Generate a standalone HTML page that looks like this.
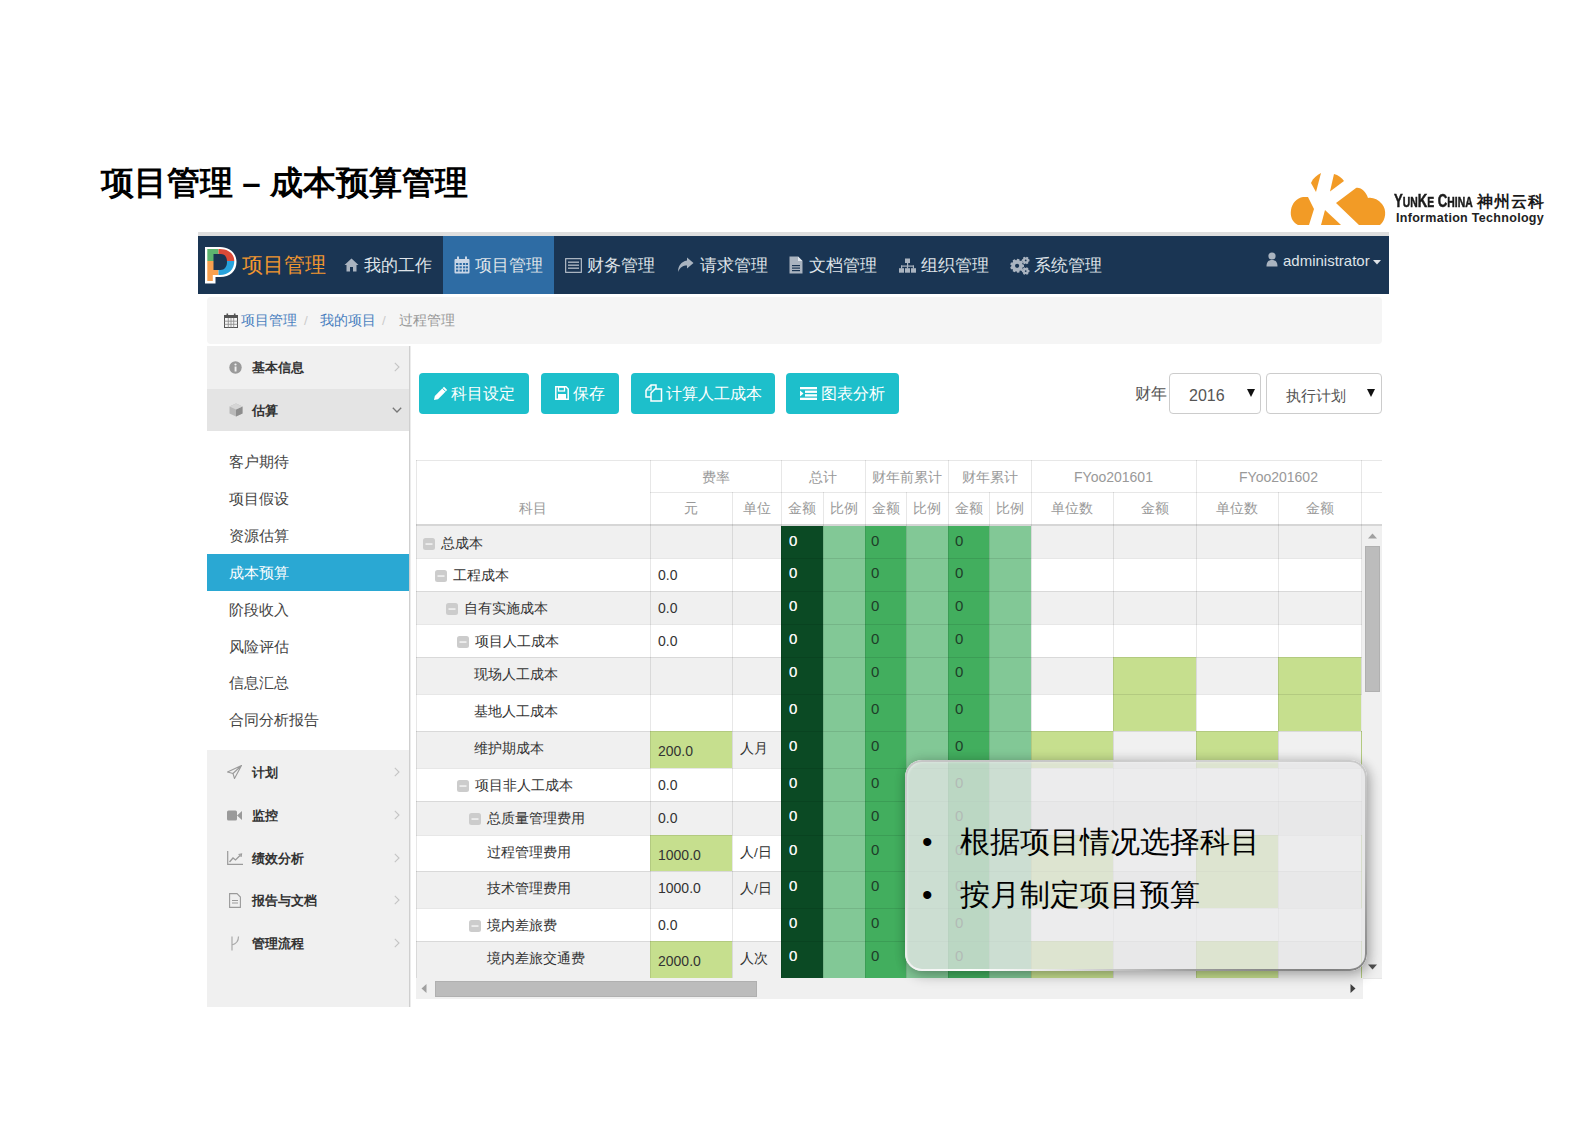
<!DOCTYPE html>
<html><head><meta charset="utf-8">
<style>
*{box-sizing:border-box;margin:0;padding:0}
html,body{width:1587px;height:1122px;overflow:hidden;background:#fff}
body{position:relative;font-family:"Liberation Sans",sans-serif;color:#333}
.abs{position:absolute}
.title{left:100px;top:160px;font-size:33px;font-weight:bold;color:#000;white-space:nowrap;line-height:40px}
.topline{left:198px;top:232px;width:1191px;height:4px;background:#dedede}
.nav{left:198px;top:236px;width:1191px;height:58px;background:#1a3553}
.nav .it{position:absolute;top:0;height:58px;line-height:58px;font-size:18px;color:#dfe3e8;white-space:nowrap}
.nav .act{background:#2e6ca4}
.brand{left:44px;top:0;height:58px;line-height:58px;font-size:20.5px;color:#f0962f;white-space:nowrap}
.bc{left:207px;top:297px;width:1175px;height:47px;background:#f5f5f5;border-radius:4px;font-size:13.5px;line-height:48px;white-space:nowrap}
.bc span{position:absolute;top:0}
.side{left:207px;top:346px;width:202px;height:661px;background:#f0f0f0;border-right:2px solid #d5d5d5}
.sitem{position:absolute;left:0;width:200px;font-size:14px;font-weight:bold;color:#333;white-space:nowrap}
.sitem .t{position:absolute;left:45px}
.sitem .ic{position:absolute;left:20px}
.sitem .chev{position:absolute;left:186px;color:#bbb;font-weight:normal}
.sub{position:absolute;left:22px;font-size:15px;color:#444;white-space:nowrap}
.btn{position:absolute;top:373px;height:41px;background:#1dbfcb;border-radius:4px;color:#fff;font-size:16px;line-height:41px;white-space:nowrap}
.btn span{position:absolute;top:0}
.sel{position:absolute;top:373px;height:41px;background:#fff;border:1px solid #ccc;border-radius:4px;font-size:16px;color:#555;line-height:41px;white-space:nowrap}
.sel span{position:absolute;top:0}
.ov{left:905px;top:760px;width:462px;height:211px;border-radius:17px;background:rgba(229,229,231,0.74);box-shadow:3px 5px 13px rgba(0,0,0,0.24),0 0 12px rgba(0,0,0,0.16),inset 2px 2px 3px rgba(255,255,255,0.5)}
.ov::before{content:'';position:absolute;left:0;top:0;right:0;bottom:0;border-radius:17px;padding:2px;background:conic-gradient(from 0deg,#cdcdcd 0deg,#d2d2d2 55deg,#b4b4b4 90deg,#808080 118deg,#9c9c9c 150deg,#c8c8c8 195deg,#fdfdfd 238deg,#dadada 262deg,#c4c4c4 300deg,#cdcdcd 360deg);-webkit-mask:linear-gradient(#000 0 0) content-box,linear-gradient(#000 0 0);-webkit-mask-composite:xor;mask-composite:exclude}
</style></head><body>

<div class="abs title" style="left:101px;top:163px">项目管理 – 成本预算管理</div>
<svg class="abs" style="left:1285px;top:168px" width="110" height="62" viewBox="1285 168 110 62">
<g fill="#f29b26">
<path d="M1303,197 L1308,197 L1314,209 L1309,225 L1298,225 C1292,222 1290,216 1291,210 C1292,203 1297,198 1303,197 Z"/>
<path d="M1311,183 C1313,178 1317,175 1321,173 L1316,192 Z"/>
<path d="M1334,174 C1338,175 1342,178 1344,181 L1330,191.5 Z"/>
<path d="M1325,210 L1341,225 L1321,225 Z"/>
<path d="M1336,203 L1356,188 C1361,187 1366,192 1368,198 C1372,197 1378,199 1382,204 C1387,210 1386,220 1380,225 L1359,225 Z"/>
</g></svg>
<div class="abs" style="left:1394px;top:191px;font-size:17.8px;font-weight:bold;color:#1a1a1a;white-space:nowrap;line-height:20px;transform:scaleX(0.74);transform-origin:0 0;-webkit-text-stroke:0.5px #1a1a1a">Y<span style="font-size:14px">UN</span>K<span style="font-size:14px">E</span> C<span style="font-size:14px">HINA</span></div>
<div class="abs" style="left:1477px;top:191px;font-size:15.5px;font-weight:bold;color:#1a1a1a;white-space:nowrap;line-height:22px;letter-spacing:1.1px">神州云科</div>
<div class="abs" style="left:1396px;top:211px;font-size:12.5px;font-weight:bold;color:#222;white-space:nowrap;line-height:15px;letter-spacing:0.3px">Information Technology</div>
<div class="abs topline"></div>
<div class="abs nav">
<svg class="abs" style="left:7px;top:11px" width="32" height="37" viewBox="0 0 32 37">
<path d="M0,0 H15 C25,0 31.5,6.5 31.5,15 C31.5,24 25,30 15,30 H10.5 V36.5 H0 Z" fill="#fff"/>
<path d="M2.3,2 H13.5 V14 H2.3 Z" fill="#5db46f"/>
<path d="M13.5,2 H15 C23.5,2 29.3,7 29.3,14 H13.5 Z" fill="#dc4a38"/>
<path d="M2.3,14 H13.5 V28 H7.8 V34 H2.3 Z" fill="#f8a04f"/>
<path d="M13.5,14 H29.3 C29.3,22.5 23.5,28 15,28 H13.5 Z" fill="#27a2dc"/>
<path d="M8.5,7 H16 C20,7 22,10.5 22,15 C22,19.5 19.5,23 15.5,23 H8.5 Z" fill="#1a3553"/>
</svg>
<div class="abs brand">项目管理</div>
<div class="it act" style="left:245px;width:111px"></div>
<div class="abs" style="left:146px;top:22px;line-height:0"><svg width="15" height="14" viewBox="0 0 15 14"><path d="M7.5,0.5 L14.5,7 L12.5,7 L12.5,13.5 L9,13.5 L9,9 L6,9 L6,13.5 L2.5,13.5 L2.5,7 L0.5,7 Z" fill="#aab4c0"/></svg></div>
<div class="it" style="left:166px;font-size:17.3px">我的工作</div>
<div class="abs" style="left:256px;top:20px;line-height:0"><svg width="16" height="18" viewBox="0 0 16 18"><rect x="0.5" y="3" width="15" height="14.5" rx="1" fill="#c9d6e6"/><rect x="3" y="0.5" width="2" height="4" fill="#c9d6e6"/><rect x="11" y="0.5" width="2" height="4" fill="#c9d6e6"/><g fill="#2e6ca4"><rect x="2" y="7" width="2.3" height="2"/><rect x="5.5" y="7" width="2.3" height="2"/><rect x="9" y="7" width="2.3" height="2"/><rect x="12" y="7" width="2" height="2"/><rect x="2" y="10.3" width="2.3" height="2"/><rect x="5.5" y="10.3" width="2.3" height="2"/><rect x="9" y="10.3" width="2.3" height="2"/><rect x="12" y="10.3" width="2" height="2"/><rect x="2" y="13.6" width="2.3" height="2"/><rect x="5.5" y="13.6" width="2.3" height="2"/><rect x="9" y="13.6" width="2.3" height="2"/><rect x="12" y="13.6" width="2" height="2"/></g></svg></div>
<div class="it" style="left:277px;font-size:17.3px">项目管理</div>
<div class="abs" style="left:367px;top:22px;line-height:0"><svg width="17" height="15" viewBox="0 0 17 15"><rect x="0.5" y="0.5" width="16" height="14" rx="1" fill="none" stroke="#aab4c0" stroke-width="1.5"/><rect x="3" y="3.5" width="11" height="1.4" fill="#aab4c0"/><rect x="3" y="6.5" width="11" height="1.4" fill="#aab4c0"/><rect x="3" y="9.5" width="11" height="1.4" fill="#aab4c0"/></svg></div>
<div class="it" style="left:389px;font-size:17.3px">财务管理</div>
<div class="abs" style="left:479px;top:21px;line-height:0"><svg width="17" height="16" viewBox="0 0 17 16"><path d="M10,0.5 L16.5,6 L10,11.5 L10,8.5 C6,8.5 3,10 1,15 C1,9 4,4.5 10,3.5 Z" fill="#aab4c0"/></svg></div>
<div class="it" style="left:502px;font-size:17.3px">请求管理</div>
<div class="abs" style="left:591px;top:20px;line-height:0"><svg width="14" height="18" viewBox="0 0 14 18"><path d="M0.5,0.5 H9 L13.5,5 V17.5 H0.5 Z" fill="#aab4c0"/><path d="M9,0.5 V5 H13.5 Z" fill="#dfe5ec"/><rect x="3" y="9" width="8" height="1.2" fill="#1a3553"/><rect x="3" y="11.5" width="8" height="1.2" fill="#1a3553"/><rect x="3" y="14" width="8" height="1.2" fill="#1a3553"/></svg></div>
<div class="it" style="left:611px;font-size:17.3px">文档管理</div>
<div class="abs" style="left:701px;top:22px;line-height:0"><svg width="17" height="15" viewBox="0 0 17 15"><rect x="6" y="0.5" width="5" height="4.5" fill="#aab4c0"/><rect x="8" y="5" width="1.2" height="3" fill="#aab4c0"/><rect x="2" y="7.5" width="13" height="1.2" fill="#aab4c0"/><rect x="2" y="7.5" width="1.2" height="3" fill="#aab4c0"/><rect x="7.9" y="7.5" width="1.2" height="3" fill="#aab4c0"/><rect x="13.8" y="7.5" width="1.2" height="3" fill="#aab4c0"/><rect x="0" y="10.2" width="5" height="4.5" fill="#aab4c0"/><rect x="6" y="10.2" width="5" height="4.5" fill="#aab4c0"/><rect x="12" y="10.2" width="5" height="4.5" fill="#aab4c0"/></svg></div>
<div class="it" style="left:723px;font-size:17.3px">组织管理</div>
<div class="abs" style="left:811px;top:19px;line-height:0"><svg width="22" height="20" viewBox="0 0 22 20"><g fill="#aab4c0" fill-rule="evenodd"><path d="M15.01,9.70 L15.01,11.90 L13.46,12.44 L13.25,12.99 L14.10,14.41 L12.69,16.08 L11.15,15.50 L10.64,15.79 L10.38,17.42 L8.22,17.80 L7.42,16.36 L6.84,16.26 L5.59,17.34 L3.69,16.24 L4.00,14.62 L3.63,14.17 L1.98,14.19 L1.23,12.14 L2.51,11.09 L2.51,10.51 L1.23,9.46 L1.98,7.41 L3.63,7.43 L4.00,6.98 L3.69,5.36 L5.59,4.26 L6.84,5.34 L7.42,5.24 L8.22,3.80 L10.38,4.18 L10.64,5.81 L11.15,6.10 L12.69,5.52 L14.10,7.19 L13.25,8.61 L13.46,9.16 Z M8.10,10.80 m-2.1,0 a2.1,2.1 0 1,0 4.2,0 a2.1,2.1 0 1,0 -4.2,0 Z"/><path d="M20.49,4.49 L20.49,6.31 L19.41,6.69 L19.17,7.10 L19.38,8.23 L17.81,9.14 L16.94,8.39 L16.46,8.39 L15.59,9.14 L14.02,8.23 L14.23,7.10 L13.99,6.69 L12.91,6.31 L12.91,4.49 L13.99,4.11 L14.23,3.70 L14.02,2.57 L15.59,1.66 L16.46,2.41 L16.94,2.41 L17.81,1.66 L19.38,2.57 L19.17,3.70 L19.41,4.11 Z M16.7,5.4 m-0.9,0 a0.9,0.9 0 1,0 1.8,0 a0.9,0.9 0 1,0 -1.8,0 Z"/><path d="M20.49,15.19 L20.49,17.01 L19.41,17.39 L19.17,17.80 L19.38,18.93 L17.81,19.84 L16.94,19.09 L16.46,19.09 L15.59,19.84 L14.02,18.93 L14.23,17.80 L13.99,17.39 L12.91,17.01 L12.91,15.19 L13.99,14.81 L14.23,14.40 L14.02,13.27 L15.59,12.36 L16.46,13.11 L16.94,13.11 L17.81,12.36 L19.38,13.27 L19.17,14.40 L19.41,14.81 Z M16.7,16.1 m-0.9,0 a0.9,0.9 0 1,0 1.8,0 a0.9,0.9 0 1,0 -1.8,0 Z"/></g></svg></div>
<div class="it" style="left:836px;font-size:17.3px">系统管理</div>
<div class="abs" style="left:1068px;top:16px;line-height:0"><svg width="12" height="15" viewBox="0 0 12 15"><circle cx="6" cy="4" r="3.6" fill="#aab4c0"/><path d="M0.5,14.5 C0.5,10 2.5,8 6,8 C9.5,8 11.5,10 11.5,14.5 Z" fill="#aab4c0"/></svg></div>
<div class="it" style="left:1085px;top:-4px;font-size:15px">administrator</div>
<svg class="abs" style="left:1175px;top:24px" width="8" height="5" viewBox="0 0 8 5"><path d="M0,0 H8 L4,4.5 Z" fill="#dfe3e8"/></svg>
</div>
<div class="abs bc">
<div class="abs" style="left:17px;top:16px;line-height:0"><svg width="14" height="15" viewBox="0 0 14 15"><rect x="0.5" y="2.5" width="13" height="12" fill="none" stroke="#555" stroke-width="1"/><rect x="0.5" y="2.5" width="13" height="2.5" fill="#555"/><rect x="2.5" y="0.5" width="1.6" height="3" fill="#555"/><rect x="9.9" y="0.5" width="1.6" height="3" fill="#555"/><g stroke="#888" stroke-width="0.8"><path d="M4.3,5 V14.5 M7,5 V14.5 M9.7,5 V14.5 M0.5,8.2 H13.5 M0.5,11.3 H13.5"/></g></svg></div>
<span style="left:34px;color:#4a7fbf">项目管理</span>
<span style="left:97px;color:#ccc">/</span>
<span style="left:113px;color:#4a7fbf">我的项目</span>
<span style="left:175px;color:#ccc">/</span>
<span style="left:192px;color:#999">过程管理</span>
</div>
<div class="abs" style="left:207px;top:346px;width:202px;height:661px;background:#f0f0f0"></div>
<div class="abs" style="left:207px;top:389px;width:202px;height:42px;background:#e4e4e4"></div>
<div class="abs" style="left:207px;top:431px;width:202px;height:319px;background:#fff"></div>
<div class="abs" style="left:207px;top:554px;width:202px;height:37px;background:#2aa8d3"></div>
<div class="abs" style="left:409px;top:346px;width:1px;height:661px;background:#cfcfcf"></div><div class="abs" style="left:410px;top:346px;width:1px;height:661px;background:#ececec"></div>
<div class="abs" style="left:229px;top:361px;line-height:0"><svg width="13" height="13" viewBox="0 0 13 13"><circle cx="6.5" cy="6.5" r="6.2" fill="#9a9a9a"/><rect x="5.6" y="5.5" width="1.9" height="5" fill="#f0f0f0"/><circle cx="6.5" cy="3.5" r="1.1" fill="#f0f0f0"/></svg></div>
<div class="abs" style="left:252px;top:358px;line-height:20px;font-size:13.3px;font-weight:bold;color:#333;white-space:nowrap">基本信息</div>
<div class="abs" style="left:394px;top:362px;line-height:0"><svg width="6" height="10" viewBox="0 0 6 10"><path d="M0.8,0.8 L5,5 L0.8,9.2" fill="none" stroke="#c4c4c4" stroke-width="1.1"/></svg></div>
<div class="abs" style="left:229px;top:403px;line-height:0"><svg width="14" height="14" viewBox="0 0 14 14"><path d="M7,0.5 L13.5,3.5 L13.5,10.5 L7,13.5 L0.5,10.5 L0.5,3.5 Z" fill="#b9b9b9"/><path d="M7,6.5 L13.5,3.5 L13.5,10.5 L7,13.5 Z" fill="#8d8d8d"/><path d="M0.5,3.5 L7,0.5 L13.5,3.5 L7,6.5 Z" fill="#d6d6d6"/></svg></div>
<div class="abs" style="left:252px;top:401px;line-height:20px;font-size:13.3px;font-weight:bold;color:#333;white-space:nowrap">估算</div>
<div class="abs" style="left:392px;top:407px;line-height:0"><svg width="10" height="6" viewBox="0 0 10 6"><path d="M0.8,0.8 L5,5 L9.2,0.8" fill="none" stroke="#777" stroke-width="1.3"/></svg></div>
<div class="abs" style="left:227px;top:765px;line-height:0"><svg width="15" height="14" viewBox="0 0 15 14"><path d="M14.5,0.5 L0.5,7 L6,8.5 L7.5,13.5 Z M6,8.5 L14.5,0.5" fill="none" stroke="#9a9a9a" stroke-width="1.1" stroke-linejoin="round"/></svg></div>
<div class="abs" style="left:252px;top:763px;line-height:20px;font-size:13.3px;font-weight:bold;color:#333;white-space:nowrap">计划</div>
<div class="abs" style="left:394px;top:767px;line-height:0"><svg width="6" height="10" viewBox="0 0 6 10"><path d="M0.8,0.8 L5,5 L0.8,9.2" fill="none" stroke="#c4c4c4" stroke-width="1.1"/></svg></div>
<div class="abs" style="left:227px;top:810px;line-height:0"><svg width="15" height="11" viewBox="0 0 15 11"><rect x="0" y="0.5" width="10" height="10" rx="1.5" fill="#9a9a9a"/><path d="M10,5.5 L15,1 L15,10 Z" fill="#9a9a9a"/></svg></div>
<div class="abs" style="left:252px;top:806px;line-height:20px;font-size:13.3px;font-weight:bold;color:#333;white-space:nowrap">监控</div>
<div class="abs" style="left:394px;top:810px;line-height:0"><svg width="6" height="10" viewBox="0 0 6 10"><path d="M0.8,0.8 L5,5 L0.8,9.2" fill="none" stroke="#c4c4c4" stroke-width="1.1"/></svg></div>
<div class="abs" style="left:227px;top:851px;line-height:0"><svg width="16" height="14" viewBox="0 0 16 14"><path d="M0.7,0 V13.3 H16" fill="none" stroke="#9a9a9a" stroke-width="1.2"/><path d="M2.5,11 L6,7 L8.5,9 L13.5,4" fill="none" stroke="#9a9a9a" stroke-width="1.3"/><path d="M11.5,3.5 L14.5,3 L14,6" fill="none" stroke="#9a9a9a" stroke-width="1.2"/></svg></div>
<div class="abs" style="left:252px;top:849px;line-height:20px;font-size:13.3px;font-weight:bold;color:#333;white-space:nowrap">绩效分析</div>
<div class="abs" style="left:394px;top:853px;line-height:0"><svg width="6" height="10" viewBox="0 0 6 10"><path d="M0.8,0.8 L5,5 L0.8,9.2" fill="none" stroke="#c4c4c4" stroke-width="1.1"/></svg></div>
<div class="abs" style="left:229px;top:893px;line-height:0"><svg width="12" height="15" viewBox="0 0 12 15"><path d="M0.6,0.6 H8 L11.4,4 V14.4 H0.6 Z" fill="none" stroke="#9a9a9a" stroke-width="1.1"/><path d="M3,7.5 H9 M3,10 H9" stroke="#9a9a9a" stroke-width="1"/></svg></div>
<div class="abs" style="left:252px;top:891px;line-height:20px;font-size:13.3px;font-weight:bold;color:#333;white-space:nowrap">报告与文档</div>
<div class="abs" style="left:394px;top:895px;line-height:0"><svg width="6" height="10" viewBox="0 0 6 10"><path d="M0.8,0.8 L5,5 L0.8,9.2" fill="none" stroke="#c4c4c4" stroke-width="1.1"/></svg></div>
<div class="abs" style="left:230px;top:936px;line-height:0"><svg width="10" height="15" viewBox="0 0 10 15"><path d="M2,0.5 V14.5 M2,9 C6,8 8.5,5 8.5,0.5" fill="none" stroke="#aaa" stroke-width="1.2"/></svg></div>
<div class="abs" style="left:252px;top:934px;line-height:20px;font-size:13.3px;font-weight:bold;color:#333;white-space:nowrap">管理流程</div>
<div class="abs" style="left:394px;top:938px;line-height:0"><svg width="6" height="10" viewBox="0 0 6 10"><path d="M0.8,0.8 L5,5 L0.8,9.2" fill="none" stroke="#c4c4c4" stroke-width="1.1"/></svg></div>
<div class="abs" style="left:229px;top:451px;line-height:22px;font-size:15px;color:#444;white-space:nowrap">客户期待</div>
<div class="abs" style="left:229px;top:488px;line-height:22px;font-size:15px;color:#444;white-space:nowrap">项目假设</div>
<div class="abs" style="left:229px;top:525px;line-height:22px;font-size:15px;color:#444;white-space:nowrap">资源估算</div>
<div class="abs" style="left:229px;top:562px;line-height:22px;font-size:15px;color:#fff;white-space:nowrap">成本预算</div>
<div class="abs" style="left:229px;top:599px;line-height:22px;font-size:15px;color:#444;white-space:nowrap">阶段收入</div>
<div class="abs" style="left:229px;top:636px;line-height:22px;font-size:15px;color:#444;white-space:nowrap">风险评估</div>
<div class="abs" style="left:229px;top:672px;line-height:22px;font-size:15px;color:#444;white-space:nowrap">信息汇总</div>
<div class="abs" style="left:229px;top:709px;line-height:22px;font-size:15px;color:#444;white-space:nowrap">合同分析报告</div>
<div class="btn" style="left:419px;width:110px"></div>
<div class="abs" style="left:433px;top:386px;line-height:0"><svg width="15" height="15" viewBox="0 0 15 15"><path d="M11,0.8 L14.2,4 L5,13.2 L1,14 L1.8,10 Z" fill="#fff"/><path d="M9.5,2.3 L12.7,5.5" stroke="#1dbfcb" stroke-width="0.9"/></svg></div>
<div class="abs" style="left:451px;top:383px;line-height:22px;font-size:16px;color:#fff;white-space:nowrap">科目设定</div>
<div class="btn" style="left:541px;width:78px"></div>
<div class="abs" style="left:555px;top:386px;line-height:0"><svg width="14" height="14" viewBox="0 0 14 14"><path d="M0.8,0.8 H11 L13.2,3 V13.2 H0.8 Z" fill="none" stroke="#fff" stroke-width="1.5"/><rect x="3.5" y="1" width="6" height="4" fill="none" stroke="#fff" stroke-width="1.3"/><rect x="3" y="8" width="8" height="5" fill="#fff"/></svg></div>
<div class="abs" style="left:573px;top:383px;line-height:22px;font-size:16px;color:#fff;white-space:nowrap">保存</div>
<div class="btn" style="left:631px;width:144px"></div>
<div class="abs" style="left:645px;top:384px;line-height:0"><svg width="18" height="18" viewBox="0 0 18 18"><path d="M1,6 L6,1 H11 V5" fill="none" stroke="#fff" stroke-width="1.5"/><path d="M1,6 V13 H6" fill="none" stroke="#fff" stroke-width="1.5"/><path d="M6,9 L10,5 H16.5 V17 H6 Z" fill="none" stroke="#fff" stroke-width="1.5"/><path d="M1,6 H6 V1" fill="none" stroke="#fff" stroke-width="1.2"/></svg></div>
<div class="abs" style="left:666px;top:383px;line-height:22px;font-size:16px;color:#fff;white-space:nowrap">计算人工成本</div>
<div class="btn" style="left:786px;width:113px"></div>
<div class="abs" style="left:800px;top:387px;line-height:0"><svg width="17" height="13" viewBox="0 0 17 13"><g fill="#fff"><rect x="0" y="0" width="17" height="2.3"/><rect x="5" y="3.6" width="12" height="2.3"/><rect x="5" y="7.2" width="12" height="2.3"/><rect x="0" y="10.7" width="17" height="2.3"/><path d="M0,3.5 L3.5,6.5 L0,9.5 Z"/></g></svg></div>
<div class="abs" style="left:821px;top:383px;line-height:22px;font-size:16px;color:#fff;white-space:nowrap">图表分析</div>
<div class="abs" style="left:1135px;top:383px;line-height:22px;font-size:16px;color:#555;white-space:nowrap">财年</div>
<div class="sel" style="left:1169px;width:92px"></div>
<div class="abs" style="left:1189px;top:385px;line-height:22px;font-size:16px;color:#555">2016</div>
<svg class="abs" style="left:1247px;top:389px" width="8" height="8" viewBox="0 0 8 8"><path d="M0,0 H8 L4,8 Z" fill="#111"/></svg>
<div class="sel" style="left:1266px;width:116px"></div>
<div class="abs" style="left:1286px;top:385px;line-height:22px;font-size:15px;color:#555;white-space:nowrap">执行计划</div>
<svg class="abs" style="left:1367px;top:389px" width="8" height="8" viewBox="0 0 8 8"><path d="M0,0 H8 L4,8 Z" fill="#111"/></svg>
<div class="abs" style="left:0;top:0;width:1587px;height:1122px;overflow:hidden;clip-path:inset(460px 205px 120px 416px)">
<div class="abs" style="left:416px;top:460px;width:966px;height:66px;background:#fff;"></div>
<div class="abs" style="left:416px;top:526px;width:365px;height:32px;background:#f0f0f0;"></div>
<div class="abs" style="left:781px;top:526px;width:42px;height:32px;background:#0b4a24;"></div>
<div class="abs" style="left:823px;top:526px;width:42px;height:32px;background:#82c896;"></div>
<div class="abs" style="left:865px;top:526px;width:41px;height:32px;background:#42ae5e;"></div>
<div class="abs" style="left:906px;top:526px;width:42px;height:32px;background:#82c896;"></div>
<div class="abs" style="left:948px;top:526px;width:41px;height:32px;background:#42ae5e;"></div>
<div class="abs" style="left:989px;top:526px;width:42px;height:32px;background:#82c896;"></div>
<div class="abs" style="left:1031px;top:526px;width:351px;height:32px;background:#f0f0f0;"></div>
<div class="abs" style="left:416px;top:558px;width:365px;height:33px;background:#fff;"></div>
<div class="abs" style="left:781px;top:558px;width:42px;height:33px;background:#0b4a24;"></div>
<div class="abs" style="left:823px;top:558px;width:42px;height:33px;background:#82c896;"></div>
<div class="abs" style="left:865px;top:558px;width:41px;height:33px;background:#42ae5e;"></div>
<div class="abs" style="left:906px;top:558px;width:42px;height:33px;background:#82c896;"></div>
<div class="abs" style="left:948px;top:558px;width:41px;height:33px;background:#42ae5e;"></div>
<div class="abs" style="left:989px;top:558px;width:42px;height:33px;background:#82c896;"></div>
<div class="abs" style="left:1031px;top:558px;width:351px;height:33px;background:#fff;"></div>
<div class="abs" style="left:416px;top:591px;width:365px;height:33px;background:#f0f0f0;"></div>
<div class="abs" style="left:781px;top:591px;width:42px;height:33px;background:#0b4a24;"></div>
<div class="abs" style="left:823px;top:591px;width:42px;height:33px;background:#82c896;"></div>
<div class="abs" style="left:865px;top:591px;width:41px;height:33px;background:#42ae5e;"></div>
<div class="abs" style="left:906px;top:591px;width:42px;height:33px;background:#82c896;"></div>
<div class="abs" style="left:948px;top:591px;width:41px;height:33px;background:#42ae5e;"></div>
<div class="abs" style="left:989px;top:591px;width:42px;height:33px;background:#82c896;"></div>
<div class="abs" style="left:1031px;top:591px;width:351px;height:33px;background:#f0f0f0;"></div>
<div class="abs" style="left:416px;top:624px;width:365px;height:33px;background:#fff;"></div>
<div class="abs" style="left:781px;top:624px;width:42px;height:33px;background:#0b4a24;"></div>
<div class="abs" style="left:823px;top:624px;width:42px;height:33px;background:#82c896;"></div>
<div class="abs" style="left:865px;top:624px;width:41px;height:33px;background:#42ae5e;"></div>
<div class="abs" style="left:906px;top:624px;width:42px;height:33px;background:#82c896;"></div>
<div class="abs" style="left:948px;top:624px;width:41px;height:33px;background:#42ae5e;"></div>
<div class="abs" style="left:989px;top:624px;width:42px;height:33px;background:#82c896;"></div>
<div class="abs" style="left:1031px;top:624px;width:351px;height:33px;background:#fff;"></div>
<div class="abs" style="left:416px;top:657px;width:365px;height:37px;background:#f0f0f0;"></div>
<div class="abs" style="left:781px;top:657px;width:42px;height:37px;background:#0b4a24;"></div>
<div class="abs" style="left:823px;top:657px;width:42px;height:37px;background:#82c896;"></div>
<div class="abs" style="left:865px;top:657px;width:41px;height:37px;background:#42ae5e;"></div>
<div class="abs" style="left:906px;top:657px;width:42px;height:37px;background:#82c896;"></div>
<div class="abs" style="left:948px;top:657px;width:41px;height:37px;background:#42ae5e;"></div>
<div class="abs" style="left:989px;top:657px;width:42px;height:37px;background:#82c896;"></div>
<div class="abs" style="left:1031px;top:657px;width:351px;height:37px;background:#f0f0f0;"></div>
<div class="abs" style="left:1113px;top:657px;width:83px;height:37px;background:#c6df8e;"></div>
<div class="abs" style="left:1278px;top:657px;width:83px;height:37px;background:#c6df8e;"></div>
<div class="abs" style="left:416px;top:694px;width:365px;height:37px;background:#fff;"></div>
<div class="abs" style="left:781px;top:694px;width:42px;height:37px;background:#0b4a24;"></div>
<div class="abs" style="left:823px;top:694px;width:42px;height:37px;background:#82c896;"></div>
<div class="abs" style="left:865px;top:694px;width:41px;height:37px;background:#42ae5e;"></div>
<div class="abs" style="left:906px;top:694px;width:42px;height:37px;background:#82c896;"></div>
<div class="abs" style="left:948px;top:694px;width:41px;height:37px;background:#42ae5e;"></div>
<div class="abs" style="left:989px;top:694px;width:42px;height:37px;background:#82c896;"></div>
<div class="abs" style="left:1031px;top:694px;width:351px;height:37px;background:#fff;"></div>
<div class="abs" style="left:1113px;top:694px;width:83px;height:37px;background:#c6df8e;"></div>
<div class="abs" style="left:1278px;top:694px;width:83px;height:37px;background:#c6df8e;"></div>
<div class="abs" style="left:416px;top:731px;width:365px;height:37px;background:#f0f0f0;"></div>
<div class="abs" style="left:650px;top:731px;width:82px;height:37px;background:#c6df8e;"></div>
<div class="abs" style="left:781px;top:731px;width:42px;height:37px;background:#0b4a24;"></div>
<div class="abs" style="left:823px;top:731px;width:42px;height:37px;background:#82c896;"></div>
<div class="abs" style="left:865px;top:731px;width:41px;height:37px;background:#42ae5e;"></div>
<div class="abs" style="left:906px;top:731px;width:42px;height:37px;background:#82c896;"></div>
<div class="abs" style="left:948px;top:731px;width:41px;height:37px;background:#42ae5e;"></div>
<div class="abs" style="left:989px;top:731px;width:42px;height:37px;background:#82c896;"></div>
<div class="abs" style="left:1031px;top:731px;width:351px;height:37px;background:#f0f0f0;"></div>
<div class="abs" style="left:1031px;top:731px;width:82px;height:37px;background:#c6df8e;"></div>
<div class="abs" style="left:1196px;top:731px;width:82px;height:37px;background:#c6df8e;"></div>
<div class="abs" style="left:1361px;top:731px;width:82px;height:37px;background:#c6df8e;"></div>
<div class="abs" style="left:416px;top:768px;width:365px;height:33px;background:#fff;"></div>
<div class="abs" style="left:781px;top:768px;width:42px;height:33px;background:#0b4a24;"></div>
<div class="abs" style="left:823px;top:768px;width:42px;height:33px;background:#82c896;"></div>
<div class="abs" style="left:865px;top:768px;width:41px;height:33px;background:#42ae5e;"></div>
<div class="abs" style="left:906px;top:768px;width:42px;height:33px;background:#82c896;"></div>
<div class="abs" style="left:948px;top:768px;width:41px;height:33px;background:#42ae5e;"></div>
<div class="abs" style="left:989px;top:768px;width:42px;height:33px;background:#82c896;"></div>
<div class="abs" style="left:1031px;top:768px;width:351px;height:33px;background:#fff;"></div>
<div class="abs" style="left:416px;top:801px;width:365px;height:34px;background:#f0f0f0;"></div>
<div class="abs" style="left:781px;top:801px;width:42px;height:34px;background:#0b4a24;"></div>
<div class="abs" style="left:823px;top:801px;width:42px;height:34px;background:#82c896;"></div>
<div class="abs" style="left:865px;top:801px;width:41px;height:34px;background:#42ae5e;"></div>
<div class="abs" style="left:906px;top:801px;width:42px;height:34px;background:#82c896;"></div>
<div class="abs" style="left:948px;top:801px;width:41px;height:34px;background:#42ae5e;"></div>
<div class="abs" style="left:989px;top:801px;width:42px;height:34px;background:#82c896;"></div>
<div class="abs" style="left:1031px;top:801px;width:351px;height:34px;background:#f0f0f0;"></div>
<div class="abs" style="left:416px;top:835px;width:365px;height:36px;background:#fff;"></div>
<div class="abs" style="left:650px;top:835px;width:82px;height:36px;background:#c6df8e;"></div>
<div class="abs" style="left:781px;top:835px;width:42px;height:36px;background:#0b4a24;"></div>
<div class="abs" style="left:823px;top:835px;width:42px;height:36px;background:#82c896;"></div>
<div class="abs" style="left:865px;top:835px;width:41px;height:36px;background:#42ae5e;"></div>
<div class="abs" style="left:906px;top:835px;width:42px;height:36px;background:#82c896;"></div>
<div class="abs" style="left:948px;top:835px;width:41px;height:36px;background:#42ae5e;"></div>
<div class="abs" style="left:989px;top:835px;width:42px;height:36px;background:#82c896;"></div>
<div class="abs" style="left:1031px;top:835px;width:351px;height:36px;background:#fff;"></div>
<div class="abs" style="left:1031px;top:835px;width:82px;height:36px;background:#c6df8e;"></div>
<div class="abs" style="left:1196px;top:835px;width:82px;height:36px;background:#c6df8e;"></div>
<div class="abs" style="left:1361px;top:835px;width:82px;height:36px;background:#c6df8e;"></div>
<div class="abs" style="left:416px;top:871px;width:365px;height:37px;background:#f0f0f0;"></div>
<div class="abs" style="left:781px;top:871px;width:42px;height:37px;background:#0b4a24;"></div>
<div class="abs" style="left:823px;top:871px;width:42px;height:37px;background:#82c896;"></div>
<div class="abs" style="left:865px;top:871px;width:41px;height:37px;background:#42ae5e;"></div>
<div class="abs" style="left:906px;top:871px;width:42px;height:37px;background:#82c896;"></div>
<div class="abs" style="left:948px;top:871px;width:41px;height:37px;background:#42ae5e;"></div>
<div class="abs" style="left:989px;top:871px;width:42px;height:37px;background:#82c896;"></div>
<div class="abs" style="left:1031px;top:871px;width:351px;height:37px;background:#f0f0f0;"></div>
<div class="abs" style="left:1031px;top:871px;width:82px;height:37px;background:#c6df8e;"></div>
<div class="abs" style="left:1196px;top:871px;width:82px;height:37px;background:#c6df8e;"></div>
<div class="abs" style="left:1361px;top:871px;width:82px;height:37px;background:#c6df8e;"></div>
<div class="abs" style="left:416px;top:908px;width:365px;height:33px;background:#fff;"></div>
<div class="abs" style="left:781px;top:908px;width:42px;height:33px;background:#0b4a24;"></div>
<div class="abs" style="left:823px;top:908px;width:42px;height:33px;background:#82c896;"></div>
<div class="abs" style="left:865px;top:908px;width:41px;height:33px;background:#42ae5e;"></div>
<div class="abs" style="left:906px;top:908px;width:42px;height:33px;background:#82c896;"></div>
<div class="abs" style="left:948px;top:908px;width:41px;height:33px;background:#42ae5e;"></div>
<div class="abs" style="left:989px;top:908px;width:42px;height:33px;background:#82c896;"></div>
<div class="abs" style="left:1031px;top:908px;width:351px;height:33px;background:#fff;"></div>
<div class="abs" style="left:416px;top:941px;width:365px;height:37px;background:#f0f0f0;"></div>
<div class="abs" style="left:650px;top:941px;width:82px;height:37px;background:#c6df8e;"></div>
<div class="abs" style="left:781px;top:941px;width:42px;height:37px;background:#0b4a24;"></div>
<div class="abs" style="left:823px;top:941px;width:42px;height:37px;background:#82c896;"></div>
<div class="abs" style="left:865px;top:941px;width:41px;height:37px;background:#42ae5e;"></div>
<div class="abs" style="left:906px;top:941px;width:42px;height:37px;background:#82c896;"></div>
<div class="abs" style="left:948px;top:941px;width:41px;height:37px;background:#42ae5e;"></div>
<div class="abs" style="left:989px;top:941px;width:42px;height:37px;background:#82c896;"></div>
<div class="abs" style="left:1031px;top:941px;width:351px;height:37px;background:#f0f0f0;"></div>
<div class="abs" style="left:1031px;top:941px;width:82px;height:37px;background:#c6df8e;"></div>
<div class="abs" style="left:1196px;top:941px;width:82px;height:37px;background:#c6df8e;"></div>
<div class="abs" style="left:1361px;top:941px;width:82px;height:37px;background:#c6df8e;"></div>
<div class="abs" style="left:416px;top:460px;width:966px;height:1px;background:rgba(0,0,0,0.095);"></div>
<div class="abs" style="left:650px;top:492px;width:732px;height:1px;background:rgba(0,0,0,0.095);"></div>
<div class="abs" style="left:416px;top:524px;width:966px;height:2px;background:#d6d6d6;"></div>
<div class="abs" style="left:416px;top:558px;width:966px;height:1px;background:rgba(0,0,0,0.095);"></div>
<div class="abs" style="left:416px;top:591px;width:966px;height:1px;background:rgba(0,0,0,0.095);"></div>
<div class="abs" style="left:416px;top:624px;width:966px;height:1px;background:rgba(0,0,0,0.095);"></div>
<div class="abs" style="left:416px;top:657px;width:966px;height:1px;background:rgba(0,0,0,0.095);"></div>
<div class="abs" style="left:416px;top:694px;width:966px;height:1px;background:rgba(0,0,0,0.095);"></div>
<div class="abs" style="left:416px;top:731px;width:966px;height:1px;background:rgba(0,0,0,0.095);"></div>
<div class="abs" style="left:416px;top:768px;width:966px;height:1px;background:rgba(0,0,0,0.095);"></div>
<div class="abs" style="left:416px;top:801px;width:966px;height:1px;background:rgba(0,0,0,0.095);"></div>
<div class="abs" style="left:416px;top:835px;width:966px;height:1px;background:rgba(0,0,0,0.095);"></div>
<div class="abs" style="left:416px;top:871px;width:966px;height:1px;background:rgba(0,0,0,0.095);"></div>
<div class="abs" style="left:416px;top:908px;width:966px;height:1px;background:rgba(0,0,0,0.095);"></div>
<div class="abs" style="left:416px;top:941px;width:966px;height:1px;background:rgba(0,0,0,0.095);"></div>
<div class="abs" style="left:416px;top:978px;width:966px;height:1px;background:rgba(0,0,0,0.095);"></div>
<div class="abs" style="left:416px;top:460px;width:1px;height:66px;background:rgba(0,0,0,0.095);"></div>
<div class="abs" style="left:650px;top:460px;width:1px;height:66px;background:rgba(0,0,0,0.095);"></div>
<div class="abs" style="left:781px;top:460px;width:1px;height:66px;background:rgba(0,0,0,0.095);"></div>
<div class="abs" style="left:865px;top:460px;width:1px;height:66px;background:rgba(0,0,0,0.095);"></div>
<div class="abs" style="left:948px;top:460px;width:1px;height:66px;background:rgba(0,0,0,0.095);"></div>
<div class="abs" style="left:1031px;top:460px;width:1px;height:66px;background:rgba(0,0,0,0.095);"></div>
<div class="abs" style="left:1196px;top:460px;width:1px;height:66px;background:rgba(0,0,0,0.095);"></div>
<div class="abs" style="left:1361px;top:460px;width:1px;height:66px;background:rgba(0,0,0,0.095);"></div>
<div class="abs" style="left:732px;top:492px;width:1px;height:34px;background:rgba(0,0,0,0.095);"></div>
<div class="abs" style="left:823px;top:492px;width:1px;height:34px;background:rgba(0,0,0,0.095);"></div>
<div class="abs" style="left:906px;top:492px;width:1px;height:34px;background:rgba(0,0,0,0.095);"></div>
<div class="abs" style="left:989px;top:492px;width:1px;height:34px;background:rgba(0,0,0,0.095);"></div>
<div class="abs" style="left:1113px;top:492px;width:1px;height:34px;background:rgba(0,0,0,0.095);"></div>
<div class="abs" style="left:1278px;top:492px;width:1px;height:34px;background:rgba(0,0,0,0.095);"></div>
<div class="abs" style="left:416px;top:526px;width:1px;height:452px;background:rgba(0,0,0,0.095);"></div>
<div class="abs" style="left:650px;top:526px;width:1px;height:452px;background:rgba(0,0,0,0.095);"></div>
<div class="abs" style="left:732px;top:526px;width:1px;height:452px;background:rgba(0,0,0,0.095);"></div>
<div class="abs" style="left:781px;top:526px;width:1px;height:452px;background:rgba(0,0,0,0.095);"></div>
<div class="abs" style="left:823px;top:526px;width:1px;height:452px;background:rgba(0,0,0,0.095);"></div>
<div class="abs" style="left:865px;top:526px;width:1px;height:452px;background:rgba(0,0,0,0.095);"></div>
<div class="abs" style="left:906px;top:526px;width:1px;height:452px;background:rgba(0,0,0,0.095);"></div>
<div class="abs" style="left:948px;top:526px;width:1px;height:452px;background:rgba(0,0,0,0.095);"></div>
<div class="abs" style="left:989px;top:526px;width:1px;height:452px;background:rgba(0,0,0,0.095);"></div>
<div class="abs" style="left:1031px;top:526px;width:1px;height:452px;background:rgba(0,0,0,0.095);"></div>
<div class="abs" style="left:1113px;top:526px;width:1px;height:452px;background:rgba(0,0,0,0.095);"></div>
<div class="abs" style="left:1196px;top:526px;width:1px;height:452px;background:rgba(0,0,0,0.095);"></div>
<div class="abs" style="left:1278px;top:526px;width:1px;height:452px;background:rgba(0,0,0,0.095);"></div>
<div class="abs" style="left:1361px;top:526px;width:1px;height:452px;background:rgba(0,0,0,0.095);"></div>
<div class="abs" style="left:650px;top:467px;width:131px;text-align:center;line-height:20px;font-size:14px;color:#999;white-space:nowrap">费率</div>
<div class="abs" style="left:781px;top:467px;width:84px;text-align:center;line-height:20px;font-size:14px;color:#999;white-space:nowrap">总计</div>
<div class="abs" style="left:865px;top:467px;width:83px;text-align:center;line-height:20px;font-size:14px;color:#999;white-space:nowrap">财年前累计</div>
<div class="abs" style="left:948px;top:467px;width:83px;text-align:center;line-height:20px;font-size:14px;color:#999;white-space:nowrap">财年累计</div>
<div class="abs" style="left:1031px;top:467px;width:165px;text-align:center;line-height:20px;font-size:14px;color:#999;white-space:nowrap">FYoo201601</div>
<div class="abs" style="left:1196px;top:467px;width:165px;text-align:center;line-height:20px;font-size:14px;color:#999;white-space:nowrap">FYoo201602</div>
<div class="abs" style="left:416px;top:498px;width:234px;text-align:center;line-height:20px;font-size:14px;color:#999;white-space:nowrap">科目</div>
<div class="abs" style="left:650px;top:498px;width:82px;text-align:center;line-height:20px;font-size:14px;color:#999;white-space:nowrap">元</div>
<div class="abs" style="left:732px;top:498px;width:49px;text-align:center;line-height:20px;font-size:14px;color:#999;white-space:nowrap">单位</div>
<div class="abs" style="left:781px;top:498px;width:42px;text-align:center;line-height:20px;font-size:14px;color:#999;white-space:nowrap">金额</div>
<div class="abs" style="left:823px;top:498px;width:42px;text-align:center;line-height:20px;font-size:14px;color:#999;white-space:nowrap">比例</div>
<div class="abs" style="left:865px;top:498px;width:41px;text-align:center;line-height:20px;font-size:14px;color:#999;white-space:nowrap">金额</div>
<div class="abs" style="left:906px;top:498px;width:42px;text-align:center;line-height:20px;font-size:14px;color:#999;white-space:nowrap">比例</div>
<div class="abs" style="left:948px;top:498px;width:41px;text-align:center;line-height:20px;font-size:14px;color:#999;white-space:nowrap">金额</div>
<div class="abs" style="left:989px;top:498px;width:42px;text-align:center;line-height:20px;font-size:14px;color:#999;white-space:nowrap">比例</div>
<div class="abs" style="left:1031px;top:498px;width:82px;text-align:center;line-height:20px;font-size:14px;color:#999;white-space:nowrap">单位数</div>
<div class="abs" style="left:1113px;top:498px;width:83px;text-align:center;line-height:20px;font-size:14px;color:#999;white-space:nowrap">金额</div>
<div class="abs" style="left:1196px;top:498px;width:82px;text-align:center;line-height:20px;font-size:14px;color:#999;white-space:nowrap">单位数</div>
<div class="abs" style="left:1278px;top:498px;width:83px;text-align:center;line-height:20px;font-size:14px;color:#999;white-space:nowrap">金额</div>
<div class="abs" style="left:423px;top:538px;line-height:0"><svg width="12" height="12" viewBox="0 0 12 12"><rect x="0" y="0" width="12" height="12" rx="2.5" fill="#cccccc"/><rect x="2.5" y="5.3" width="7" height="1.5" fill="#f4f4f4"/></svg></div>
<div class="abs" style="left:441px;top:534px;line-height:20px;font-size:13.5px;color:#333;white-space:nowrap;">总成本</div>
<div class="abs" style="left:789px;top:531px;line-height:20px;font-size:15px;color:#f2f2f2;white-space:nowrap;font-weight:normal;text-shadow:0 0 0.4px #fff">0</div>
<div class="abs" style="left:871px;top:531px;line-height:20px;font-size:15px;color:#1e3d29;white-space:nowrap;">0</div>
<div class="abs" style="left:955px;top:531px;line-height:20px;font-size:15px;color:#1e3d29;white-space:nowrap;">0</div>
<div class="abs" style="left:435px;top:570px;line-height:0"><svg width="12" height="12" viewBox="0 0 12 12"><rect x="0" y="0" width="12" height="12" rx="2.5" fill="#cccccc"/><rect x="2.5" y="5.3" width="7" height="1.5" fill="#f4f4f4"/></svg></div>
<div class="abs" style="left:453px;top:566px;line-height:20px;font-size:13.5px;color:#333;white-space:nowrap;">工程成本</div>
<div class="abs" style="left:658px;top:565px;line-height:20px;font-size:14px;color:#333;white-space:nowrap;">0.0</div>
<div class="abs" style="left:789px;top:563px;line-height:20px;font-size:15px;color:#f2f2f2;white-space:nowrap;font-weight:normal;text-shadow:0 0 0.4px #fff">0</div>
<div class="abs" style="left:871px;top:563px;line-height:20px;font-size:15px;color:#1e3d29;white-space:nowrap;">0</div>
<div class="abs" style="left:955px;top:563px;line-height:20px;font-size:15px;color:#1e3d29;white-space:nowrap;">0</div>
<div class="abs" style="left:446px;top:603px;line-height:0"><svg width="12" height="12" viewBox="0 0 12 12"><rect x="0" y="0" width="12" height="12" rx="2.5" fill="#cccccc"/><rect x="2.5" y="5.3" width="7" height="1.5" fill="#f4f4f4"/></svg></div>
<div class="abs" style="left:464px;top:599px;line-height:20px;font-size:13.5px;color:#333;white-space:nowrap;">自有实施成本</div>
<div class="abs" style="left:658px;top:598px;line-height:20px;font-size:14px;color:#333;white-space:nowrap;">0.0</div>
<div class="abs" style="left:789px;top:596px;line-height:20px;font-size:15px;color:#f2f2f2;white-space:nowrap;font-weight:normal;text-shadow:0 0 0.4px #fff">0</div>
<div class="abs" style="left:871px;top:596px;line-height:20px;font-size:15px;color:#1e3d29;white-space:nowrap;">0</div>
<div class="abs" style="left:955px;top:596px;line-height:20px;font-size:15px;color:#1e3d29;white-space:nowrap;">0</div>
<div class="abs" style="left:457px;top:636px;line-height:0"><svg width="12" height="12" viewBox="0 0 12 12"><rect x="0" y="0" width="12" height="12" rx="2.5" fill="#cccccc"/><rect x="2.5" y="5.3" width="7" height="1.5" fill="#f4f4f4"/></svg></div>
<div class="abs" style="left:475px;top:632px;line-height:20px;font-size:13.5px;color:#333;white-space:nowrap;">项目人工成本</div>
<div class="abs" style="left:658px;top:631px;line-height:20px;font-size:14px;color:#333;white-space:nowrap;">0.0</div>
<div class="abs" style="left:789px;top:629px;line-height:20px;font-size:15px;color:#f2f2f2;white-space:nowrap;font-weight:normal;text-shadow:0 0 0.4px #fff">0</div>
<div class="abs" style="left:871px;top:629px;line-height:20px;font-size:15px;color:#1e3d29;white-space:nowrap;">0</div>
<div class="abs" style="left:955px;top:629px;line-height:20px;font-size:15px;color:#1e3d29;white-space:nowrap;">0</div>
<div class="abs" style="left:474px;top:665px;line-height:20px;font-size:13.5px;color:#333;white-space:nowrap;">现场人工成本</div>
<div class="abs" style="left:789px;top:662px;line-height:20px;font-size:15px;color:#f2f2f2;white-space:nowrap;font-weight:normal;text-shadow:0 0 0.4px #fff">0</div>
<div class="abs" style="left:871px;top:662px;line-height:20px;font-size:15px;color:#1e3d29;white-space:nowrap;">0</div>
<div class="abs" style="left:955px;top:662px;line-height:20px;font-size:15px;color:#1e3d29;white-space:nowrap;">0</div>
<div class="abs" style="left:474px;top:702px;line-height:20px;font-size:13.5px;color:#333;white-space:nowrap;">基地人工成本</div>
<div class="abs" style="left:789px;top:699px;line-height:20px;font-size:15px;color:#f2f2f2;white-space:nowrap;font-weight:normal;text-shadow:0 0 0.4px #fff">0</div>
<div class="abs" style="left:871px;top:699px;line-height:20px;font-size:15px;color:#1e3d29;white-space:nowrap;">0</div>
<div class="abs" style="left:955px;top:699px;line-height:20px;font-size:15px;color:#1e3d29;white-space:nowrap;">0</div>
<div class="abs" style="left:474px;top:739px;line-height:20px;font-size:13.5px;color:#333;white-space:nowrap;">维护期成本</div>
<div class="abs" style="left:658px;top:741px;line-height:20px;font-size:14px;color:#333;white-space:nowrap;">200.0</div>
<div class="abs" style="left:740px;top:739px;line-height:20px;font-size:13.6px;color:#333;white-space:nowrap;">人月</div>
<div class="abs" style="left:789px;top:736px;line-height:20px;font-size:15px;color:#f2f2f2;white-space:nowrap;font-weight:normal;text-shadow:0 0 0.4px #fff">0</div>
<div class="abs" style="left:871px;top:736px;line-height:20px;font-size:15px;color:#1e3d29;white-space:nowrap;">0</div>
<div class="abs" style="left:955px;top:736px;line-height:20px;font-size:15px;color:#1e3d29;white-space:nowrap;">0</div>
<div class="abs" style="left:457px;top:780px;line-height:0"><svg width="12" height="12" viewBox="0 0 12 12"><rect x="0" y="0" width="12" height="12" rx="2.5" fill="#cccccc"/><rect x="2.5" y="5.3" width="7" height="1.5" fill="#f4f4f4"/></svg></div>
<div class="abs" style="left:475px;top:776px;line-height:20px;font-size:13.5px;color:#333;white-space:nowrap;">项目非人工成本</div>
<div class="abs" style="left:658px;top:775px;line-height:20px;font-size:14px;color:#333;white-space:nowrap;">0.0</div>
<div class="abs" style="left:789px;top:773px;line-height:20px;font-size:15px;color:#f2f2f2;white-space:nowrap;font-weight:normal;text-shadow:0 0 0.4px #fff">0</div>
<div class="abs" style="left:871px;top:773px;line-height:20px;font-size:15px;color:#1e3d29;white-space:nowrap;">0</div>
<div class="abs" style="left:955px;top:773px;line-height:20px;font-size:15px;color:#1e3d29;white-space:nowrap;">0</div>
<div class="abs" style="left:469px;top:813px;line-height:0"><svg width="12" height="12" viewBox="0 0 12 12"><rect x="0" y="0" width="12" height="12" rx="2.5" fill="#cccccc"/><rect x="2.5" y="5.3" width="7" height="1.5" fill="#f4f4f4"/></svg></div>
<div class="abs" style="left:487px;top:809px;line-height:20px;font-size:13.5px;color:#333;white-space:nowrap;">总质量管理费用</div>
<div class="abs" style="left:658px;top:808px;line-height:20px;font-size:14px;color:#333;white-space:nowrap;">0.0</div>
<div class="abs" style="left:789px;top:806px;line-height:20px;font-size:15px;color:#f2f2f2;white-space:nowrap;font-weight:normal;text-shadow:0 0 0.4px #fff">0</div>
<div class="abs" style="left:871px;top:806px;line-height:20px;font-size:15px;color:#1e3d29;white-space:nowrap;">0</div>
<div class="abs" style="left:955px;top:806px;line-height:20px;font-size:15px;color:#1e3d29;white-space:nowrap;">0</div>
<div class="abs" style="left:487px;top:843px;line-height:20px;font-size:13.5px;color:#333;white-space:nowrap;">过程管理费用</div>
<div class="abs" style="left:658px;top:845px;line-height:20px;font-size:14px;color:#333;white-space:nowrap;">1000.0</div>
<div class="abs" style="left:740px;top:843px;line-height:20px;font-size:13.6px;color:#333;white-space:nowrap;">人/日</div>
<div class="abs" style="left:789px;top:840px;line-height:20px;font-size:15px;color:#f2f2f2;white-space:nowrap;font-weight:normal;text-shadow:0 0 0.4px #fff">0</div>
<div class="abs" style="left:871px;top:840px;line-height:20px;font-size:15px;color:#1e3d29;white-space:nowrap;">0</div>
<div class="abs" style="left:955px;top:840px;line-height:20px;font-size:15px;color:#1e3d29;white-space:nowrap;">0</div>
<div class="abs" style="left:487px;top:879px;line-height:20px;font-size:13.5px;color:#333;white-space:nowrap;">技术管理费用</div>
<div class="abs" style="left:658px;top:878px;line-height:20px;font-size:14px;color:#333;white-space:nowrap;">1000.0</div>
<div class="abs" style="left:740px;top:879px;line-height:20px;font-size:13.6px;color:#333;white-space:nowrap;">人/日</div>
<div class="abs" style="left:789px;top:876px;line-height:20px;font-size:15px;color:#f2f2f2;white-space:nowrap;font-weight:normal;text-shadow:0 0 0.4px #fff">0</div>
<div class="abs" style="left:871px;top:876px;line-height:20px;font-size:15px;color:#1e3d29;white-space:nowrap;">0</div>
<div class="abs" style="left:955px;top:876px;line-height:20px;font-size:15px;color:#1e3d29;white-space:nowrap;">0</div>
<div class="abs" style="left:469px;top:920px;line-height:0"><svg width="12" height="12" viewBox="0 0 12 12"><rect x="0" y="0" width="12" height="12" rx="2.5" fill="#cccccc"/><rect x="2.5" y="5.3" width="7" height="1.5" fill="#f4f4f4"/></svg></div>
<div class="abs" style="left:487px;top:916px;line-height:20px;font-size:13.5px;color:#333;white-space:nowrap;">境内差旅费</div>
<div class="abs" style="left:658px;top:915px;line-height:20px;font-size:14px;color:#333;white-space:nowrap;">0.0</div>
<div class="abs" style="left:789px;top:913px;line-height:20px;font-size:15px;color:#f2f2f2;white-space:nowrap;font-weight:normal;text-shadow:0 0 0.4px #fff">0</div>
<div class="abs" style="left:871px;top:913px;line-height:20px;font-size:15px;color:#1e3d29;white-space:nowrap;">0</div>
<div class="abs" style="left:955px;top:913px;line-height:20px;font-size:15px;color:#1e3d29;white-space:nowrap;">0</div>
<div class="abs" style="left:487px;top:949px;line-height:20px;font-size:13.5px;color:#333;white-space:nowrap;">境内差旅交通费</div>
<div class="abs" style="left:658px;top:951px;line-height:20px;font-size:14px;color:#333;white-space:nowrap;">2000.0</div>
<div class="abs" style="left:740px;top:949px;line-height:20px;font-size:13.6px;color:#333;white-space:nowrap;">人次</div>
<div class="abs" style="left:789px;top:946px;line-height:20px;font-size:15px;color:#f2f2f2;white-space:nowrap;font-weight:normal;text-shadow:0 0 0.4px #fff">0</div>
<div class="abs" style="left:871px;top:946px;line-height:20px;font-size:15px;color:#1e3d29;white-space:nowrap;">0</div>
<div class="abs" style="left:955px;top:946px;line-height:20px;font-size:15px;color:#1e3d29;white-space:nowrap;">0</div>
<div class="abs" style="left:1362px;top:526px;width:20px;height:452px;background:#f0f0f0;"></div>
<div class="abs" style="left:1365px;top:546px;width:15px;height:146px;background:#bcbcbc;border:1px solid #b0b0b0"></div>
<svg class="abs" style="left:1368px;top:533px" width="9" height="6" viewBox="0 0 9 6"><path d="M0,5.5 L4.5,0.5 L9,5.5 Z" fill="#a0a0a0"/></svg>
<svg class="abs" style="left:1368px;top:964px" width="9" height="6" viewBox="0 0 9 6"><path d="M0,0.5 L4.5,5.5 L9,0.5 Z" fill="#505050"/></svg>
<div class="abs" style="left:416px;top:978px;width:947px;height:21px;background:#f0f0f0;"></div>
<div class="abs" style="left:435px;top:981px;width:322px;height:16px;background:#bcbcbc;border:1px solid #b0b0b0"></div>
<svg class="abs" style="left:421px;top:984px" width="6" height="9" viewBox="0 0 6 9"><path d="M5.5,0 L0.5,4.5 L5.5,9 Z" fill="#a0a0a0"/></svg>
<svg class="abs" style="left:1350px;top:984px" width="6" height="9" viewBox="0 0 6 9"><path d="M0.5,0 L5.5,4.5 L0.5,9 Z" fill="#404040"/></svg>
</div>
<div class="abs ov"></div>
<div class="abs" style="left:922px;top:823px;line-height:38px;font-size:30px;color:#000;white-space:nowrap">•</div>
<div class="abs" style="left:960px;top:823px;line-height:38px;font-size:30px;color:#000;white-space:nowrap">根据项目情况选择科目</div>
<div class="abs" style="left:922px;top:876px;line-height:38px;font-size:30px;color:#000;white-space:nowrap">•</div>
<div class="abs" style="left:960px;top:876px;line-height:38px;font-size:30px;color:#000;white-space:nowrap">按月制定项目预算</div>
</body></html>
